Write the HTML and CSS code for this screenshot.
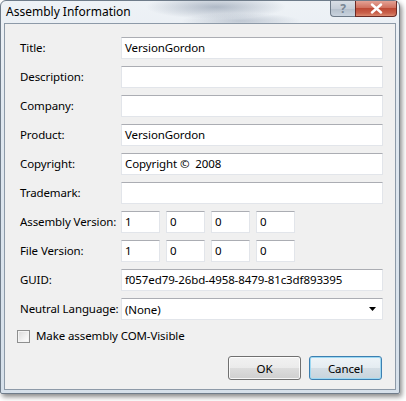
FILE: index.html
```html
<!DOCTYPE html>
<html lang="en">
<head>
<meta charset="utf-8">
<title>Assembly Information</title>
<link rel="stylesheet" href="styles.css">
</head>
<body>
<div class="window">
  <div class="titlebar">
    <span class="title">Assembly Information</span>
    <div class="caption-buttons">
      <div class="cap help">?</div>
      <div class="cap close">
        <svg width="13" height="11" viewBox="0 0 13 11"><path d="M2 1.5 L11 9.5 M11 1.5 L2 9.5" stroke="#fff" stroke-width="2.4" stroke-linecap="round"/></svg>
      </div>
    </div>
  </div>
  <div class="client">
    <div class="form">
      <label class="lbl">Title:</label>
      <div class="field">VersionGordon</div>
      <label class="lbl">Description:</label>
      <div class="field"></div>
      <label class="lbl">Company:</label>
      <div class="field"></div>
      <label class="lbl">Product:</label>
      <div class="field">VersionGordon</div>
      <label class="lbl">Copyright:</label>
      <div class="field">Copyright ©&nbsp; 2008</div>
      <label class="lbl">Trademark:</label>
      <div class="field"></div>
      <label class="lbl">Assembly Version:</label>
      <div class="versions">
        <div class="field ver">1</div>
        <div class="field ver">0</div>
        <div class="field ver">0</div>
        <div class="field ver">0</div>
      </div>
      <label class="lbl">File Version:</label>
      <div class="versions">
        <div class="field ver">1</div>
        <div class="field ver">0</div>
        <div class="field ver">0</div>
        <div class="field ver">0</div>
      </div>
      <label class="lbl">GUID:</label>
      <div class="field">f057ed79-26bd-4958-8479-81c3df893395</div>
      <label class="lbl">Neutral Language:</label>
      <div class="field combo">
        <span>(None)</span>
        <svg class="arrow" width="7" height="4" viewBox="0 0 7 4"><path d="M0 0 H7 L3.5 4 Z" fill="#000"/></svg>
      </div>
    </div>
    <div class="check-row">
      <span class="checkbox"></span>
      <span class="check-label">Make assembly COM-Visible</span>
    </div>
    <div class="buttons">
      <div class="btn">OK</div>
      <div class="btn focused">Cancel</div>
    </div>
  </div>
</div>
</body>
</html>
```
FILE: styles.css
```css
html, body {
  margin: 0;
  padding: 0;
  background: #ffffff;
}
body {
  font-family: "Noto Sans", "Open Sans", sans-serif;
  font-size: 11.5px;
  letter-spacing: -0.1px;
  color: #000;
  width: 406px;
  height: 401px;
  overflow: hidden;
}
.window {
  width: 400px;
  height: 394px;
  box-sizing: border-box;
  padding: 0 3px 3px 3px;
  border-radius: 6px 6px 2px 2px;
  border: 1px solid #6f7c8a;
  background:
    radial-gradient(ellipse 70px 12px at 215px 6px, rgba(60,80,110,0.35), rgba(60,80,110,0) 100%),
    radial-gradient(ellipse 60px 8px at 240px 20px, rgba(60,80,110,0.25), rgba(60,80,110,0) 100%),
    linear-gradient(180deg, #eef2f6 0%, #dfe7ef 30%, #d6e0ea 100%);
  box-shadow: 2px 3px 5px rgba(0,0,0,0.45);
  display: flex;
  flex-direction: column;
}
.titlebar {
  height: 22px;
  display: flex;
  align-items: flex-start;
  flex-shrink: 0;
}
.title {
  margin-left: 2px;
  margin-top: 3px;
  font-size: 12px;
  letter-spacing: 0;
  line-height: 15px;
}
.caption-buttons {
  margin-left: auto;
  margin-right: -1px;
  display: flex;
}
.cap {
  height: 16px;
  box-sizing: border-box;
  display: flex;
  align-items: center;
  justify-content: center;
  border: 1px solid #6d7a88;
  border-top: none;
}
.help {
  width: 25px;
  border-radius: 0 0 0 4px;
  border-right: none;
  background: linear-gradient(180deg, #d8dee5 0%, #c6ced8 50%, #b4bfcb 51%, #c9d3de 100%);
  color: #7a8795;
  font-size: 12px;
  font-weight: bold;
}
.close {
  width: 42px;
  border-radius: 0 0 4px 0;
  border-color: #6b2a24;
  background: linear-gradient(180deg, #e4a295 0%, #d0715f 45%, #bd4a36 50%, #c9604a 80%, #da8a70 100%);
}
.client {
  flex: 1;
  background: #f0f0f0;
  border: 1px solid #8d9aa8;
  padding: 13px 12px 0 15px;
  display: flex;
  flex-direction: column;
}
.form {
  display: grid;
  grid-template-columns: 101px 262px;
  grid-auto-rows: 22px;
  row-gap: 7px;
  align-items: center;
}
.lbl {
  line-height: 16px;
  white-space: nowrap;
}
.field {
  height: 22px;
  box-sizing: border-box;
  background: #fff;
  border: 1px solid #e2e5ea;
  border-top-color: #abadb3;
  padding: 0 3px;
  line-height: 19px;
  white-space: nowrap;
  overflow: hidden;
}
.versions {
  display: flex;
  gap: 6px;
  height: 22px;
}
.ver {
  width: 39px;
}
.combo {
  display: flex;
  align-items: center;
  justify-content: space-between;
  padding-right: 6px;
}
.check-row {
  display: flex;
  align-items: center;
  margin-top: 8px;
  margin-left: -3px;
  gap: 6px;
}
.checkbox {
  width: 13px;
  height: 13px;
  box-sizing: border-box;
  border: 1px solid #8e8f8f;
  background: linear-gradient(135deg, #d9d9d9 0%, #f2f2f2 60%, #ffffff 100%);
  box-shadow: inset 0 0 0 1px #f4f4f4;
}
.check-label {
  line-height: 16px;
}
.buttons {
  display: flex;
  justify-content: flex-end;
  gap: 8px;
  margin-top: 12px;
  margin-right: 1px;
}
.btn {
  width: 73px;
  height: 24px;
  box-sizing: border-box;
  border: 1px solid #707070;
  border-radius: 3px;
  background: linear-gradient(180deg, #f2f2f2 0%, #ebebeb 49%, #dddddd 50%, #cfcfcf 100%);
  box-shadow: inset 0 0 0 1px rgba(255,255,255,0.8);
  display: flex;
  align-items: center;
  justify-content: center;
}
.btn.focused {
  border-color: #3c7fb1;
  background: linear-gradient(180deg, #eef4f8 0%, #e4ecf1 49%, #d4dee5 50%, #c8d4dc 100%);
  box-shadow: inset 0 0 0 1px #9cd8f2;
}
```
